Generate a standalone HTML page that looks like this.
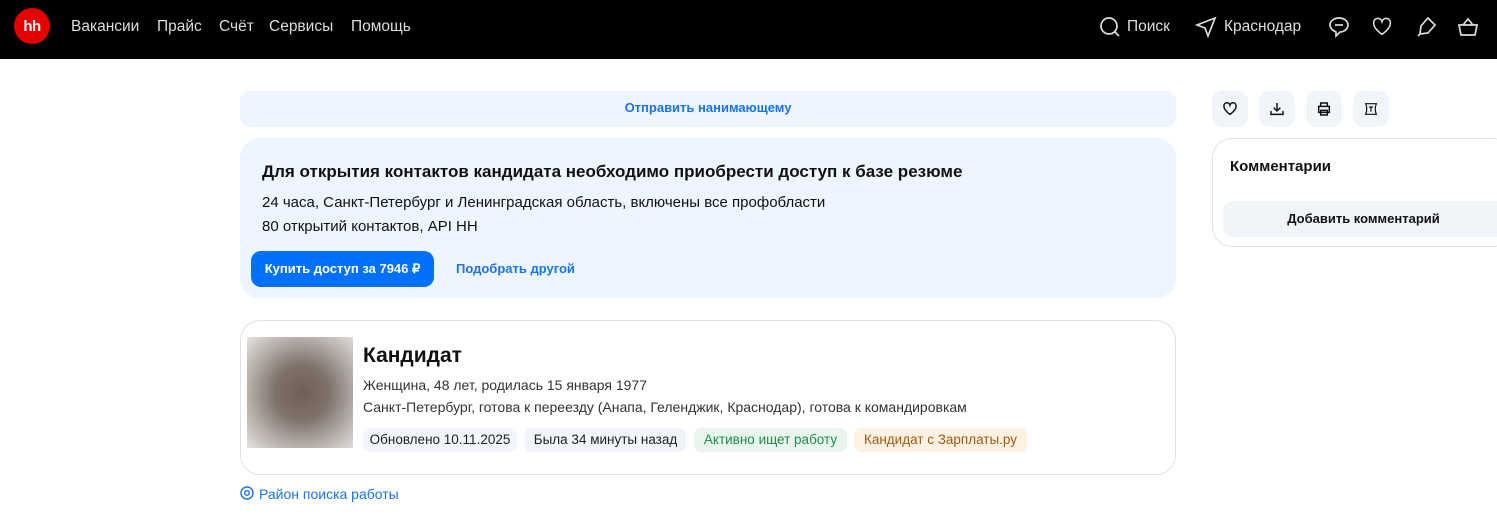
<!DOCTYPE html>
<html><head><meta charset="utf-8"><style>
*{box-sizing:border-box;margin:0;padding:0}
body{width:1497px;height:519px;background:#fff;font-family:"Liberation Sans",sans-serif;color:#111;position:relative;overflow:hidden}
.hdr{position:absolute;left:0;top:0;width:1497px;height:59px;background:#000}
.logo{position:absolute;left:14px;top:8px;width:36px;height:36px;border-radius:50%;background:#e60000;color:#fff;font-weight:bold;font-size:15px;text-align:center;line-height:37px;letter-spacing:-0.5px}
.nav{position:absolute;top:18px;color:#ddd;font-size:15.5px}
.ab{position:absolute}
.blue{color:#1a73e8}
.tag{position:absolute;top:428px;height:24px;border-radius:7px;font-size:13.5px;line-height:24px;text-align:center;background:#f1f4f9;color:#222;white-space:nowrap}
.ib{position:absolute;top:91px;width:36px;height:36px;border-radius:10px;background:#f1f4f9}
.ib svg{position:absolute;left:10px;top:10px}
</style></head><body>
<div class="hdr">
<div class="logo">hh</div>
<div class="nav" style="left:71px">Вакансии</div>
<div class="nav" style="left:157px">Прайс</div>
<div class="nav" style="left:219px">Счёт</div>
<div class="nav" style="left:269px">Сервисы</div>
<div class="nav" style="left:351px">Помощь</div>
<svg class="ab" style="left:1099px;top:16px" width="22" height="22" viewBox="0 0 22 22" fill="none" stroke="#ddd" stroke-width="1.7"><circle cx="10" cy="10" r="8"/><path d="M16 16l4 4"/></svg>
<div class="nav" style="left:1127px">Поиск</div>
<svg class="ab" style="left:1195px;top:16px" width="22" height="22" viewBox="0 0 22 22" fill="none" stroke="#ddd" stroke-width="1.7"><path d="M20 2L2 9l8 3 3 8z"/></svg>
<div class="nav" style="left:1224px">Краснодар</div>
<svg class="ab" style="left:1327px;top:15px" width="24" height="24" viewBox="0 0 24 24" fill="none" stroke="#ddd" stroke-width="1.7"><path d="M12 3c5 0 9 3 9 7s-4 7-8 7l-4 4v-4c-3-1-6-4-6-7 0-4 4-7 9-7z"/><path d="M8 10h8"/></svg>
<svg class="ab" style="left:1371px;top:16px" width="22" height="22" viewBox="0 0 24 24" fill="none" stroke="#ddd" stroke-width="1.7"><path d="M12 20S3 14 3 8.5A4.5 4.5 0 0112 6a4.5 4.5 0 019 2.5C21 14 12 20 12 20z"/></svg>
<svg class="ab" style="left:1414px;top:15px" width="24" height="24" viewBox="0 0 24 24" fill="none" stroke="#ddd" stroke-width="1.7"><path d="M14 3l7 7-7 8-8 1 1-8z M6 19l-2 2"/></svg>
<svg class="ab" style="left:1456px;top:15px" width="24" height="24" viewBox="0 0 24 24" fill="none" stroke="#ddd" stroke-width="1.7"><path d="M3 10h18l-2 10H5z M7 10l5-6 5 6"/></svg>
</div>

<div class="ab" style="left:240px;top:91px;width:936px;height:36px;border-radius:10px;background:#edf5fe;text-align:center;line-height:34px;font-size:13px;font-weight:bold;color:#1a73e8">Отправить нанимающему</div>

<div class="ab" style="left:240px;top:138px;width:936px;height:160px;border-radius:20px;background:#edf5fe">
<div class="ab" style="left:22px;top:24px;font-size:17px;font-weight:bold">Для открытия контактов кандидата необходимо приобрести доступ к базе резюме</div>
<div class="ab" style="left:22px;top:56px;font-size:15px">24 часа, Санкт-Петербург и Ленинградская область, включены все профобласти</div>
<div class="ab" style="left:22px;top:80px;font-size:15px">80 открытий контактов, API HH</div>
<div class="ab" style="left:11px;top:113px;width:183px;height:36px;border-radius:10px;background:#0070ff;color:#fff;font-weight:bold;font-size:13px;text-align:center;line-height:36px">Купить доступ за 7946 ₽</div>
<div class="ab blue" style="left:216px;top:123px;font-size:13px;font-weight:bold">Подобрать другой</div>
</div>

<div class="ab" style="left:240px;top:320px;width:936px;height:155px;border:1px solid #dde2e8;border-radius:20px"></div>
<div class="ab" style="left:247px;top:337px;width:106px;height:111px;background:radial-gradient(ellipse at 52% 50%,#6e5e55 0%,#7f726b 35%,#b0a8a3 65%,#e6e3e1 100%)"></div>
<div class="ab" style="left:363px;top:344px;font-size:21px;font-weight:bold">Кандидат</div>
<div class="ab" style="left:363px;top:377px;font-size:14px;color:#333">Женщина, 48 лет, родилась 15 января 1977</div>
<div class="ab" style="left:363px;top:399px;font-size:14px;color:#333">Санкт-Петербург, готова к переезду (Анапа, Геленджик, Краснодар), готова к командировкам</div>
<div class="tag" style="left:363px;width:154px">Обновлено 10.11.2025</div>
<div class="tag" style="left:525px;width:161px">Была 34 минуты назад</div>
<div class="tag" style="left:694px;width:153px;background:#e8f6ee;color:#1e8a4e">Активно ищет работу</div>
<div class="tag" style="left:854px;width:173px;background:#fdf1e4;color:#a05a10">Кандидат с Зарплаты.ру</div>
<svg class="ab" style="left:240px;top:486px" width="14" height="14" viewBox="0 0 14 14" fill="none" stroke="#1a73e8" stroke-width="1.4"><circle cx="7" cy="7" r="6"/><circle cx="7" cy="7" r="2.3"/></svg>
<div class="ab blue" style="left:259px;top:486px;font-size:14px">Район поиска работы</div>

<div class="ib" style="left:1212px"><svg width="16" height="16" viewBox="0 0 24 24" fill="none" stroke="#111" stroke-width="2.2"><path d="M12 20S3 14 3 8.5A4.5 4.5 0 0112 6a4.5 4.5 0 019 2.5C21 14 12 20 12 20z"/></svg></div>
<div class="ib" style="left:1259px"><svg width="16" height="16" viewBox="0 0 24 24" fill="none" stroke="#111" stroke-width="2.2"><path d="M12 3v12M7 10l5 5 5-5M3 15v5h18v-5"/></svg></div>
<div class="ib" style="left:1306px"><svg width="16" height="16" viewBox="0 0 24 24" fill="none" stroke="#111" stroke-width="2.2"><path d="M7 8V3h10v5M4 8h16v9H4zM7 14h10v7H7z"/></svg></div>
<div class="ib" style="left:1353px"><svg width="16" height="16" viewBox="0 0 24 24" fill="none" stroke="#111" stroke-width="1.8"><path d="M4 4h16c-2 5-2 11 0 16H4c2-5 2-11 0-16zM9 9h6M12 9v7"/></svg></div>

<div class="ab" style="left:1212px;top:138px;width:300px;height:109px;border:1px solid #dde2e8;border-radius:20px"></div>
<div class="ab" style="left:1230px;top:158px;font-size:15px;font-weight:bold">Комментарии</div>
<div class="ab" style="left:1223px;top:201px;width:290px;height:36px;border-radius:10px;background:#f1f4f9"></div>
<div class="ab" style="left:1223px;top:211px;width:281px;text-align:center;font-size:13px;font-weight:bold">Добавить комментарий</div>
</body></html>
